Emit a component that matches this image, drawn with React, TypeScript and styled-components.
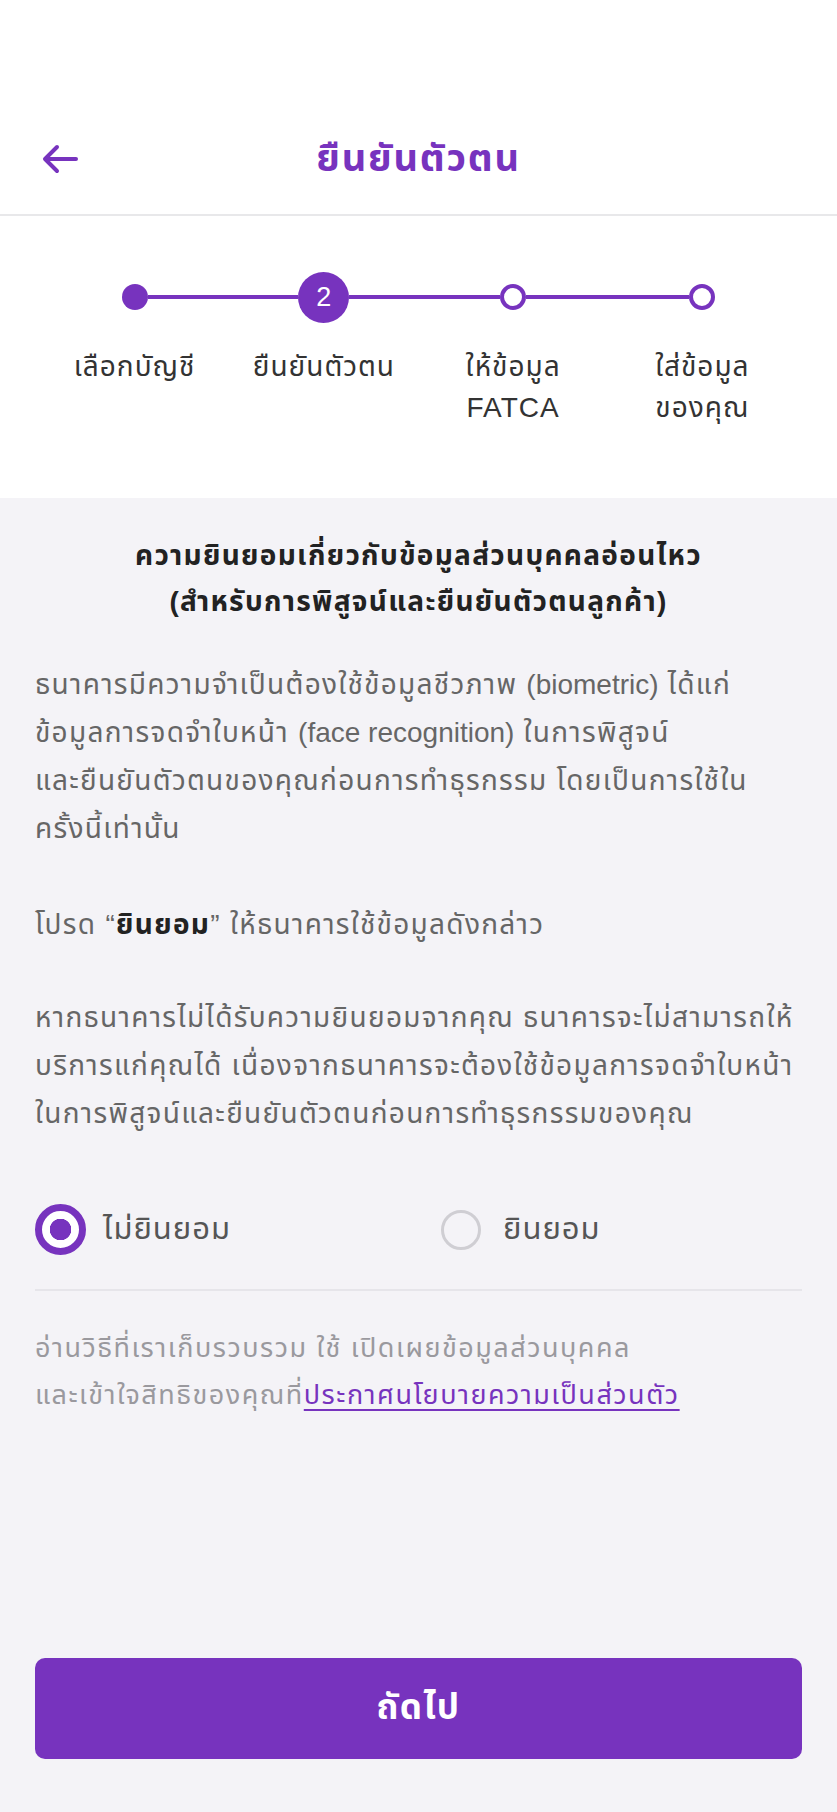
import React, { useState } from 'react';
import styled, { createGlobalStyle } from 'styled-components';

const PURPLE = '#7733be';
const FONT = `"Liberation Sans", "Noto Sans Thai", "Noto Sans", sans-serif`;

const GlobalStyle = createGlobalStyle`
  html, body {
    margin: 0;
    padding: 0;
    background: #f4f3f7;
    font-family: ${FONT};
  }
  * { box-sizing: border-box; }
`;

/* ===== header ===== */
const Page = styled.main`
  min-height: 1812px;
  display: flex;
  flex-direction: column;
  background: #f4f3f7;
`;
const TopArea = styled.header`
  background: #fff;
  padding-top: 104px;
  border-bottom: 2px solid #e8e8ea;
`;
const NavBar = styled.div`
  height: 110px;
  display: grid;
  grid-template-columns: 90px 1fr 90px;
  align-items: center;
  padding: 0 42px;
`;
const BackButton = styled.button`
  border: none;
  background: transparent;
  padding: 0;
  width: 36px;
  height: 30px;
  display: flex;
  align-items: center;
  cursor: pointer;
`;
const Title = styled.h1`
  margin: 0;
  text-align: center;
  font-size: 38px;
  letter-spacing: 1.8px;
  font-weight: 700;
  color: ${PURPLE};
`;

/* ===== stepper ===== */
const StepperBox = styled.section`
  background: #fff;
  padding: 56px 40px 70px;
  display: grid;
  grid-template-columns: repeat(4, 1fr);
`;
const Step = styled.div`
  display: flex;
  flex-direction: column;
  align-items: stretch;
`;
const Track = styled.div`
  height: 50px;
  display: flex;
  align-items: center;
`;
const Connector = styled.span<{ $hidden?: boolean }>`
  flex: 1;
  height: 4px;
  background: ${({ $hidden }) => ($hidden ? 'transparent' : PURPLE)};
`;
const Dot = styled.span<{ $kind: 'done' | 'current' | 'todo' }>`
  flex: none;
  border-radius: 50%;
  display: flex;
  align-items: center;
  justify-content: center;
  color: #fff;
  font-size: 27px;
  width: ${({ $kind }) => ($kind === 'current' ? '51px' : '26px')};
  height: ${({ $kind }) => ($kind === 'current' ? '51px' : '26px')};
  background: ${({ $kind }) => ($kind === 'todo' ? '#fff' : PURPLE)};
  border: ${({ $kind }) => ($kind === 'todo' ? `4px solid ${PURPLE}` : 'none')};
`;
const StepLabel = styled.div`
  margin-top: 24px;
  text-align: center;
  font-size: 28px;
  letter-spacing: 1px;
  line-height: 41px;
  color: #333;
  white-space: pre-line;
`;

/* ===== content ===== */
const Content = styled.section`
  flex: 1;
  display: flex;
  flex-direction: column;
  padding: 35px 35px 53px;
`;
const Heading = styled.h2`
  margin: 0 0 36px;
  text-align: center;
  font-size: 28px;
  letter-spacing: 1.3px;
  line-height: 46px;
  font-weight: 700;
  color: #222;
`;
const Para = styled.p<{ $gap?: number }>`
  margin: 0 0 ${({ $gap }) => $gap ?? 48}px;
  font-size: 28px;
  letter-spacing: 1.3px;
  line-height: 48px;
  color: #666;
  white-space: nowrap;
  b {
    color: #222;
    font-weight: 700;
  }
`;
const Latin = styled.span`
  letter-spacing: 0;
`;
const Choices = styled.div`
  display: grid;
  grid-template-columns: 1fr 1fr;
  column-gap: 33px;
  margin-top: 66px;
  padding-bottom: 34px;
  border-bottom: 2px solid #e6e5ea;
`;
const Choice = styled.label`
  display: flex;
  align-items: center;
  gap: 17px;
  cursor: pointer;
  font-size: 31px;
  letter-spacing: 1px;
  color: #555;
`;
const RadioBox = styled.span`
  width: 51px;
  height: 51px;
  display: flex;
  align-items: center;
  justify-content: center;
`;
const Radio = styled.span<{ $on: boolean }>`
  border-radius: 50%;
  width: ${({ $on }) => ($on ? '51px' : '40px')};
  height: ${({ $on }) => ($on ? '51px' : '40px')};
  border: ${({ $on }) => ($on ? `7px solid ${PURPLE}` : '3px solid #cfced3')};
  background: ${({ $on }) => ($on ? `radial-gradient(circle, ${PURPLE} 10.5px, #fff 11px)` : 'transparent')};
`;
const Footnote = styled.p`
  margin: 34px 0 0;
  font-size: 27px;
  letter-spacing: 1.5px;
  line-height: 47px;
  color: #9a999e;
  white-space: nowrap;
  a {
    color: ${PURPLE};
    text-decoration: underline;
    text-underline-offset: 5px;
  }
`;
const NextButton = styled.button`
  margin-top: auto;
  height: 101px;
  border: none;
  border-radius: 10px;
  background: ${PURPLE};
  color: #fff;
  font-family: ${FONT};
  font-size: 35px;
  letter-spacing: 1.4px;
  font-weight: 700;
  cursor: pointer;
`;

const steps: { label: string; kind: 'done' | 'current' | 'todo' }[] = [
  { label: 'เลือกบัญชี', kind: 'done' },
  { label: 'ยืนยันตัวตน', kind: 'current' },
  { label: 'ให้ข้อมูล\nFATCA', kind: 'todo' },
  { label: 'ใส่ข้อมูล\nของคุณ', kind: 'todo' },
];

export default function App() {
  const [consent, setConsent] = useState(false);

  return (
    <Page>
      <GlobalStyle />
      <TopArea>
        <NavBar>
          <BackButton aria-label="back">
            <svg width="36" height="30" viewBox="0 0 36 30" fill="none">
              <path
                d="M34 15H4M15 3 3 15l12 12"
                stroke={PURPLE}
                strokeWidth="4"
                strokeLinecap="round"
                strokeLinejoin="round"
              />
            </svg>
          </BackButton>
          <Title>ยืนยันตัวตน</Title>
          <span />
        </NavBar>
      </TopArea>

      <StepperBox>
        {steps.map((s, i) => (
          <Step key={s.label}>
            <Track>
              <Connector $hidden={i === 0} />
              <Dot $kind={s.kind}>{s.kind === 'current' ? i + 1 : null}</Dot>
              <Connector $hidden={i === steps.length - 1} />
            </Track>
            <StepLabel>{s.label}</StepLabel>
          </Step>
        ))}
      </StepperBox>

      <Content>
        <Heading>
          ความยินยอมเกี่ยวกับข้อมูลส่วนบุคคลอ่อนไหว
          <br />
          (สำหรับการพิสูจน์และยืนยันตัวตนลูกค้า)
        </Heading>
        <Para>
          ธนาคารมีความจำเป็นต้องใช้ข้อมูลชีวภาพ <Latin>(biometric)</Latin> ได้แก่
          <br />
          ข้อมูลการจดจำใบหน้า <Latin>(face recognition)</Latin> ในการพิสูจน์
          <br />
          และยืนยันตัวตนของคุณก่อนการทำธุรกรรม โดยเป็นการใช้ใน
          <br />
          ครั้งนี้เท่านั้น
        </Para>
        <Para $gap={45}>
          โปรด “<b>ยินยอม</b>” ให้ธนาคารใช้ข้อมูลดังกล่าว
        </Para>
        <Para $gap={0}>
          หากธนาคารไม่ได้รับความยินยอมจากคุณ ธนาคารจะไม่สามารถให้
          <br />
          บริการแก่คุณได้ เนื่องจากธนาคารจะต้องใช้ข้อมูลการจดจำใบหน้า
          <br />
          ในการพิสูจน์และยืนยันตัวตนก่อนการทำธุรกรรมของคุณ
        </Para>

        <Choices>
          <Choice onClick={() => setConsent(false)}>
            <RadioBox>
              <Radio $on={!consent} />
            </RadioBox>
            ไม่ยินยอม
          </Choice>
          <Choice onClick={() => setConsent(true)}>
            <RadioBox>
              <Radio $on={consent} />
            </RadioBox>
            ยินยอม
          </Choice>
        </Choices>

        <Footnote>
          อ่านวิธีที่เราเก็บรวบรวม ใช้ เปิดเผยข้อมูลส่วนบุคคล
          <br />
          และเข้าใจสิทธิของคุณที่<a href="#privacy">ประกาศนโยบายความเป็นส่วนตัว</a>
        </Footnote>

        <NextButton>ถัดไป</NextButton>
      </Content>
    </Page>
  );
}
